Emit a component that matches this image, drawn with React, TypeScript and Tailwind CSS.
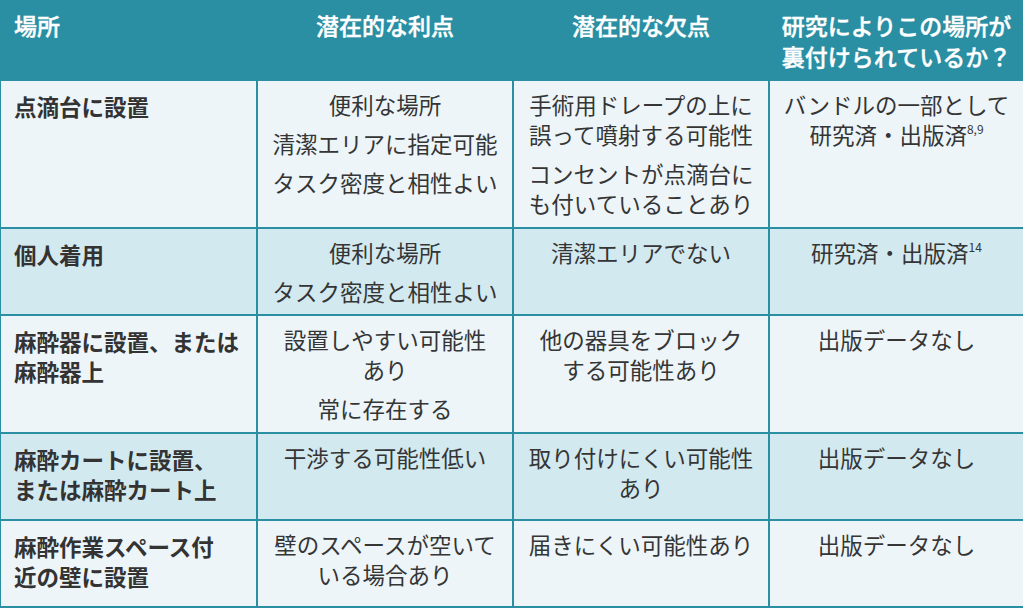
import React from 'react';

const Sup: React.FC<{ children: React.ReactNode }> = ({ children }) => (
  <sup className="text-[12px] relative -top-[2px] align-super leading-none">{children}</sup>
);

const headers = ['場所', '潜在的な利点', '潜在的な欠点', '研究によりこの場所が\n裏付けられているか？'];

const rows: { place: string[]; pros: string[][]; cons: string[][]; study: React.ReactNode[][]; tint: boolean }[] = [
  {
    place: ['点滴台に設置'],
    pros: [['便利な場所'], ['清潔エリアに指定可能'], ['タスク密度と相性よい']],
    cons: [['手術用ドレープの上に', '誤って噴射する可能性'], ['コンセントが点滴台に', 'も付いていることあり']],
    study: [['バンドルの一部として', <>研究済・出版済<Sup>8,9</Sup></>]],
    tint: false,
  },
  {
    place: ['個人着用'],
    pros: [['便利な場所'], ['タスク密度と相性よい']],
    cons: [['清潔エリアでない']],
    study: [[<>研究済・出版済<Sup>14</Sup></>]],
    tint: true,
  },
  {
    place: ['麻酔器に設置、または', '麻酔器上'],
    pros: [['設置しやすい可能性', 'あり'], ['常に存在する']],
    cons: [['他の器具をブロック', 'する可能性あり']],
    study: [['出版データなし']],
    tint: false,
  },
  {
    place: ['麻酔カートに設置、', 'または麻酔カート上'],
    pros: [['干渉する可能性低い']],
    cons: [['取り付けにくい可能性', 'あり']],
    study: [['出版データなし']],
    tint: true,
  },
  {
    place: ['麻酔作業スペース付', '近の壁に設置'],
    pros: [['壁のスペースが空いて', 'いる場合あり']],
    cons: [['届きにくい可能性あり']],
    study: [['出版データなし']],
    tint: false,
  },
];

const Paras: React.FC<{ paras: React.ReactNode[][] }> = ({ paras }) => (
  <div className="flex flex-col gap-[9px]">
    {paras.map((lines, i) => (
      <div key={i}>
        {lines.map((l, j) => (
          <div key={j} className="whitespace-nowrap">{l}</div>
        ))}
      </div>
    ))}
  </div>
);

export default function App() {
  return (
    <div
      className="w-[1024px] h-[609px] bg-white"
      style={{ fontFamily: '"Noto Sans CJK JP", "Noto Sans", sans-serif' }}
    >
      <div className="grid grid-cols-[255px_254px_254px_253px] grid-rows-[79px_146px_85px_116px_85px_85px] gap-[2px] bg-[#2a8fa3] px-[1px] pb-[2px] w-[1023px] text-[22.5px] leading-[30px] text-[#353535]">
        {headers.map((h, i) => (
          <div
            key={h}
            className={`bg-[#2a8fa3] text-white font-medium pt-[10px] text-[23px] leading-[31px] [-webkit-text-stroke:0.4px_white] ${
              i === 0 ? 'pl-[13px] text-left' : 'text-center'
            }`}
          >
            {h.split('\n').map((l) => (
              <div key={l} className="whitespace-nowrap">{l}</div>
            ))}
          </div>
        ))}
        {rows.map((r, ri) => {
          const bg = r.tint ? 'bg-[#d3e9f0]' : 'bg-[#edf5f9]';
          return (
            <React.Fragment key={ri}>
              <div className={`${bg} pl-[13px] pt-[10px] font-bold text-[#333]`}>
                {r.place.map((l) => (
                  <div key={l} className="whitespace-nowrap">{l}</div>
                ))}
              </div>
              <div className={`${bg} pt-[8px] text-center`}>
                <Paras paras={r.pros} />
              </div>
              <div className={`${bg} pt-[8px] text-center`}>
                <Paras paras={r.cons} />
              </div>
              <div className={`${bg} pt-[8px] text-center`}>
                <Paras paras={r.study} />
              </div>
            </React.Fragment>
          );
        })}
      </div>
    </div>
  );
}
